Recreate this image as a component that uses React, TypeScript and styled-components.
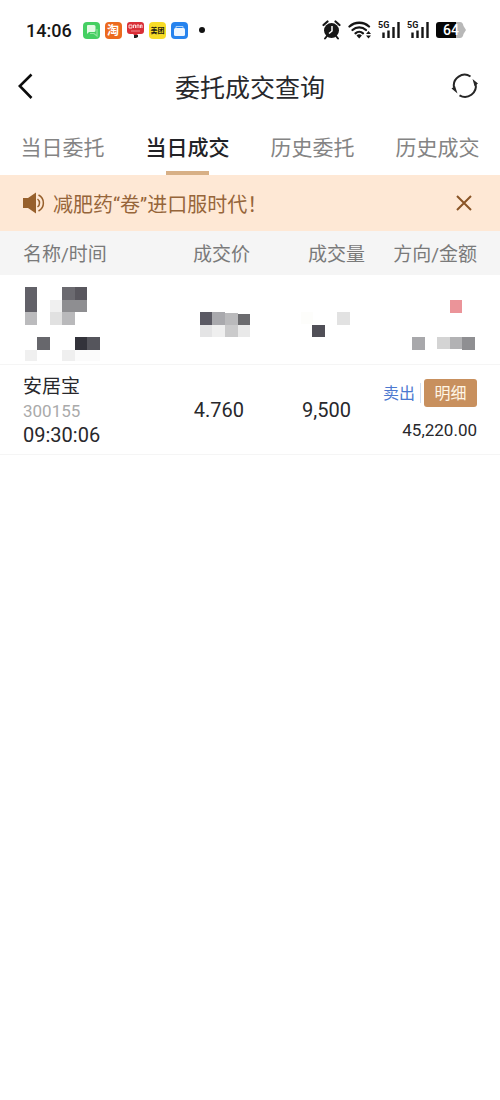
import React from 'react'
import styled, { createGlobalStyle } from 'styled-components'

const tabs = ['当日委托', '当日成交', '历史委托', '历史成交']

// [x, y, width, height, color]
type Block = [number, number, number, number, string]

const nameBlocks: Block[] = [
    [0, 0, 12, 25, '#626168'],
    [0, 25, 12, 13, '#bbbbbd'],
    [25, 13, 12, 12, '#f0f0f0'],
    [25, 25, 12, 13, '#e1e1e1'],
    [37, 0, 13, 13, '#6b6a70'],
    [50, 0, 12, 13, '#59575e'],
    [37, 13, 25, 12, '#8e8e91'],
    [37, 25, 13, 13, '#b9b9bb'],
    [12, 50, 13, 13, '#67676c'],
    [50, 50, 12, 13, '#33333b'],
    [62, 50, 13, 13, '#55555c'],
    [0, 63, 12, 11, '#f0f0f0'],
    [37, 63, 13, 11, '#efefef'],
    [50, 63, 25, 11, '#fbfbfb'],
]

const priceBlocks: Block[] = [
    [0, 25, 12, 13, '#5b5a64'],
    [12, 25, 13, 13, '#a9a9ad'],
    [25, 26, 13, 12, '#bababc'],
    [38, 27, 12, 11, '#6b6b6e'],
    [0, 38, 12, 12, '#e4e4e5'],
    [12, 38, 13, 12, '#efefef'],
    [25, 38, 13, 12, '#cacacb'],
    [38, 38, 12, 12, '#e9e9e9'],
]

const amountBlocks: Block[] = [
    [0, 25, 12, 12, '#fdfdfb'],
    [36, 25, 13, 13, '#e2e2e2'],
    [11, 38, 13, 12, '#504f57'],
]

const totalBlocks: Block[] = [
    [38, 13, 12, 13, '#eb9499'],
    [0, 50, 13, 13, '#a8a8ab'],
    [25, 50, 13, 12, '#d4d4d4'],
    [38, 50, 12, 12, '#b2b2b4'],
    [50, 50, 13, 13, '#8f8f92'],
]

const Mosaic = ({ blocks, width }: { blocks: Block[]; width: number }) => (
    <MosaicSvg width={width} height="74" viewBox={`0 0 ${width} 74`} aria-hidden="true">
        {blocks.map(([x, y, w, h, fill]) => (
            <rect key={`${x}-${y}`} x={x} y={y} width={w} height={h} fill={fill} />
        ))}
    </MosaicSvg>
)

/* status bar icons */
const MessageIcon = () => (
    <svg width="17" height="17" viewBox="0 0 17 17">
        <rect width="17" height="17" rx="4" fill="#45cf62" />
        <path d="M5 3h6a1.500 1.500 0 0 1 1.500 1.500v4a1.500 1.500 0 0 1-1.500 1.500H6l-2 2V4a1 1 0 0 1 1-1z" fill="#e4f9e4" />
        <path d="M7 11.500h4l3 2.500V7" fill="none" stroke="#8fe39b" strokeWidth="1.200" />
    </svg>
)

const TaobaoIcon = () => (
    <svg width="17" height="17" viewBox="0 0 17 17">
        <rect width="17" height="17" rx="4" fill="#ec6a1e" />
        <IconText x="8" y="13" fontSize="12" fill="#fff">淘</IconText>
    </svg>
)

const RedIcon = () => (
    <svg width="17" height="17" viewBox="0 0 17 17">
        <path d="M3 0h11a3 3 0 0 1 3 3v6a3 3 0 0 1-3 3h-3l-2.500 2L6 12H3a3 3 0 0 1-3-3V3a3 3 0 0 1 3-3z" fill="#d92f37" />
        <path d="M2 3h3v3H2zM6.500 6V3h2v3M10 6V3h2v3M13.500 6V3h1.500v3" fill="none" stroke="#fbd5d5" />
        <path d="M4 9h9" stroke="#ee8c8f" />
        <path d="M7 13h4v2l-2 1H7z" fill="#222" />
    </svg>
)

const MeituanIcon = () => (
    <svg width="17" height="17" viewBox="0 0 17 17">
        <rect width="17" height="17" rx="4" fill="#f8dc27" />
        <IconText x="8.500" y="11" fontSize="7" fill="#1c1a10">美团</IconText>
    </svg>
)

const StoreIcon = () => (
    <svg width="17" height="17" viewBox="0 0 17 17">
        <rect width="17" height="17" rx="4" fill="#2683ee" />
        <path d="M5 6V4.500h7V6" fill="none" stroke="#a9d2fb" />
        <rect x="3" y="6" width="11" height="8" rx="1.500" fill="#eef6ff" />
    </svg>
)

const AlarmIcon = () => (
    <svg width="19" height="20" viewBox="0 0 19 20">
        <circle cx="9.500" cy="10.500" r="7.500" fill="#161616" />
        <path d="M1.500 5l4-3.500M17.500 5l-4-3.500" stroke="#161616" strokeWidth="2.200" strokeLinecap="round" />
        <path d="M5 16l-2 2.500M14 16l2 2.500" stroke="#161616" strokeWidth="2" strokeLinecap="round" />
        <path d="M10 6v5l-3 2.500" fill="none" stroke="#fff" strokeWidth="1.500" />
    </svg>
)

const WifiIcon = () => (
    <svg width="23" height="20" viewBox="0 0 23 20">
        <g fill="none" stroke="#161616" strokeWidth="2.300" strokeLinecap="round">
            <path d="M1.500 6.500a14.500 14.500 0 0 1 19.500 0" />
            <path d="M4.500 10a10 10 0 0 1 13.500 0" />
            <path d="M7.500 13.300a5.500 5.500 0 0 1 7.500 0" />
        </g>
        <path d="M11.200 18.500l-2.700-3a4 4 0 0 1 5.400 0z" fill="#161616" />
        <path d="M18 14l2.500-3 2.500 3zM18 15.500l2.500 3 2.500-3z" fill="#161616" />
    </svg>
)

const SignalIcon = () => (
    <svg width="22" height="20" viewBox="0 0 22 20">
        <text x="0" y="8" fontSize="9" fontWeight="700" fill="#161616">5G</text>
        <path d="M5.500 18v-5.500M10.500 18v-7.500M15.500 18V7M20.500 18V2" stroke="#161616" strokeWidth="2.400" />
    </svg>
)

const BatteryIcon = () => (
    <svg width="30" height="20" viewBox="0 0 30 20">
        <path d="M20 2h4c2 0 3 1.500 3.500 4L30 10l-2.500 4c-.5 2.500-1.500 4-3.500 4h-4z" fill="#b8b8b8" />
        <path d="M3 2h17v16H3a3 3 0 0 1-3-3V5a3 3 0 0 1 3-3z" fill="#050505" />
        <text x="15" y="15" fontSize="14" fontWeight="500" textAnchor="middle" fill="#fff">64</text>
    </svg>
)

const App = () => {
    const [active, setActive] = React.useState(1)
    const [showNotice, setShowNotice] = React.useState(true)

    return (
        <>
            <GlobalStyle />

            <StatusBar>
                <Clock>14:06</Clock>
                <AppIcons>
                    <MessageIcon />
                    <TaobaoIcon />
                    <RedIcon />
                    <MeituanIcon />
                    <StoreIcon />
                </AppIcons>
                <Dot />
                <SystemIcons>
                    <AlarmIcon />
                    <WifiIcon />
                    <SignalIcon />
                    <SignalIcon />
                    <BatteryIcon />
                </SystemIcons>
            </StatusBar>

            <TitleBar>
                <IconButton aria-label="返回">
                    <svg width="16" height="28" viewBox="0 0 16 28">
                        <path d="M13.500 1.500L1.800 13 13.500 25" fill="none" stroke="#0c0c0c" strokeWidth="2.600" />
                    </svg>
                </IconButton>
                <Title>委托成交查询</Title>
                <IconButton aria-label="刷新">
                    <svg width="34" height="28" viewBox="0 0 34 28">
                        <g fill="none" stroke="#262626" strokeWidth="2">
                            <path d="M6 14.500A10.800 10.800 0 0 1 22.500 3.500" />
                            <path d="M27.500 10.500A10.800 10.800 0 0 1 11.500 22.300" />
                        </g>
                        <path d="M24.500 6l5.500 4.500-3.500 2.500zM9.500 20.500L3.500 15.500l3.500-2.500z" fill="#262626" />
                    </svg>
                </IconButton>
            </TitleBar>

            <Tabs role="tablist">
                {tabs.map((tab, i) => (
                    <Tab key={tab} role="tab" aria-selected={i === active} $active={i === active} onClick={() => setActive(i)}>
                        {tab}
                    </Tab>
                ))}
            </Tabs>

            {showNotice && (
                <Notice>
                    <svg width="22" height="22" viewBox="0 0 22 22">
                        <path d="M0 6h5l8-5.500v21L5 16H0z" fill="#97602c" />
                        <path d="M14.500 7a5 5 0 0 1 0 8M15.500 3a9 9 0 0 1 0 16" fill="none" stroke="#97602c" strokeWidth="1.500" />
                    </svg>
                    <NoticeText>减肥药“卷”进口服时代！</NoticeText>
                    <IconButton aria-label="关闭" onClick={() => setShowNotice(false)}>
                        <svg width="16" height="16" viewBox="0 0 16 16">
                            <path d="M1 1l14 14M15 1L1 15" stroke="#8a5527" strokeWidth="2" />
                        </svg>
                    </IconButton>
                </Notice>
            )}

            <Table>
                <thead>
                    <tr>
                        <Th $width="27%" $left>名称/时间</Th>
                        <Th $width="23%">成交价</Th>
                        <Th $width="23%">成交量</Th>
                        <Th $width="27%" $last>方向/金额</Th>
                    </tr>
                </thead>
                <tbody>
                    {/* hidden record */}
                    <tr>
                        <MaskedTd $left><Mosaic blocks={nameBlocks} width={75} /></MaskedTd>
                        <MaskedTd><Mosaic blocks={priceBlocks} width={50} /></MaskedTd>
                        <MaskedTd $right={14}><Mosaic blocks={amountBlocks} width={50} /></MaskedTd>
                        <MaskedTd $right={25}><Mosaic blocks={totalBlocks} width={63} /></MaskedTd>
                    </tr>
                    <tr>
                        <Td $left>
                            <Name>安居宝</Name>
                            <Code>300155</Code>
                            <Time>09:30:06</Time>
                        </Td>
                        <Td $right={6}>4.760</Td>
                        <Td $right={14}>9,500</Td>
                        <Td $right={23}>
                            <Actions>
                                <Side>卖出</Side>
                                <DetailButton>明细</DetailButton>
                            </Actions>
                            <Total>45,220.00</Total>
                        </Td>
                    </tr>
                </tbody>
            </Table>
        </>
    )
}
export default App

const GlobalStyle = createGlobalStyle`
* {
    box-sizing: border-box;
}

body {
    margin: 0;
    background: #fff;
    color: #28282c;
    font-family: Roboto, "Noto Sans CJK SC", sans-serif;
}

button {
    margin: 0;
    padding: 0;
    border: 0;
    background: none;
    font: inherit;
    color: inherit;
    cursor: pointer;
}

svg {
    display: block;
    flex: none;
}
`

const StatusBar = styled.header`
display: flex;
align-items: center;
height: 60px;
padding: 0 34px 0 26px;
`

const Clock = styled.span`
font-size: 18px;
font-weight: 500;
color: #161616;
`

const AppIcons = styled.div`
display: flex;
gap: 5px;
margin-left: 11px;
`

const IconText = styled.text`
font-family: "Noto Sans CJK SC", sans-serif;
font-weight: 700;
text-anchor: middle;
`

const Dot = styled.span`
width: 6px;
height: 6px;
margin-left: 11px;
border-radius: 50%;
background: #111;
`

const SystemIcons = styled.div`
display: flex;
gap: 7px;
margin-left: auto;
`

const TitleBar = styled.div`
display: grid;
grid-template-columns: 1fr auto 1fr;
align-items: center;
height: 54px;
padding: 0 18px;

> :last-child {
    justify-self: end;
}
`

const IconButton = styled.button`
justify-self: start;
`

const Title = styled.h1`
margin: 0;
padding-top: 4px;
font-size: 25px;
line-height: 36px;
font-weight: 400;
`

const Tabs = styled.div`
display: flex;
height: 61px;
`

const Tab = styled.button<{ $active: boolean }>`
display: flex;
flex: 1;
flex-direction: column;
align-items: center;
justify-content: space-between;
padding-top: 18px;
font-size: 21px;
line-height: 32px;
font-weight: ${p => (p.$active ? 500 : 400)};
color: ${p => (p.$active ? '#222226' : '#848484')};

&::after {
    content: "";
    width: 43px;
    height: 4px;
    background: ${p => (p.$active ? '#d8b086' : 'transparent')};
}
`

const Notice = styled.div`
display: flex;
align-items: center;
height: 56px;
padding: 0 28px 0 23px;
background: #fee8d5;
color: #96653a;
`

const NoticeText = styled.span`
flex: 1;
margin-left: 8px;
padding-top: 4px;
font-size: 20px;
line-height: 28px;
`

const Table = styled.table`
width: 100%;
table-layout: fixed;
border-collapse: separate;
border-spacing: 0;
`

const Th = styled.th<{ $width: string; $left?: boolean; $last?: boolean }>`
width: ${p => p.$width};
height: 44px;
padding: 4px ${p => (p.$last ? 23 : 0)}px 0 ${p => (p.$left ? 23 : 0)}px;
background: #f5f5f5;
color: #7a7a7a;
font-size: 19px;
line-height: 28px;
font-weight: 400;
text-align: ${p => (p.$left ? 'left' : 'right')};
white-space: nowrap;
`

const Td = styled.td<{ $left?: boolean; $right?: number }>`
height: 90px;
padding: 1px ${p => p.$right || 0}px 0 ${p => (p.$left ? 23 : 0)}px;
border-bottom: 1px solid #f5f5f5;
font-size: 20px;
line-height: 24px;
text-align: ${p => (p.$left ? 'left' : 'right')};
vertical-align: middle;
`

const MaskedTd = styled(Td)`
padding-top: 12px;
padding-left: ${p => (p.$left ? 25 : 0)}px;
vertical-align: top;
`

const MosaicSvg = styled.svg`
display: inline-block;
vertical-align: top;
`

const Name = styled.div`
padding-top: 2px;
font-size: 19px;
line-height: 24px;
`

const Code = styled.div`
font-size: 17px;
line-height: 24px;
color: #aaa;
`

const Time = styled.div`
line-height: 24px;
`

const Actions = styled.div`
display: flex;
align-items: center;
justify-content: flex-end;
`

const Side = styled.span`
padding: 2px 5px 0 0;
border-right: 1px solid #d3dff0;
font-size: 16px;
line-height: 18px;
color: #4c78cf;
`

const DetailButton = styled.button`
width: 53px;
height: 28px;
margin-left: 3px;
padding-top: 2px;
border-radius: 3px;
background: #c8905e;
color: #fff6e6;
font-size: 16px;
line-height: 26px;
`

const Total = styled.div`
margin-top: 11px;
font-size: 17px;
line-height: 24px;
`
